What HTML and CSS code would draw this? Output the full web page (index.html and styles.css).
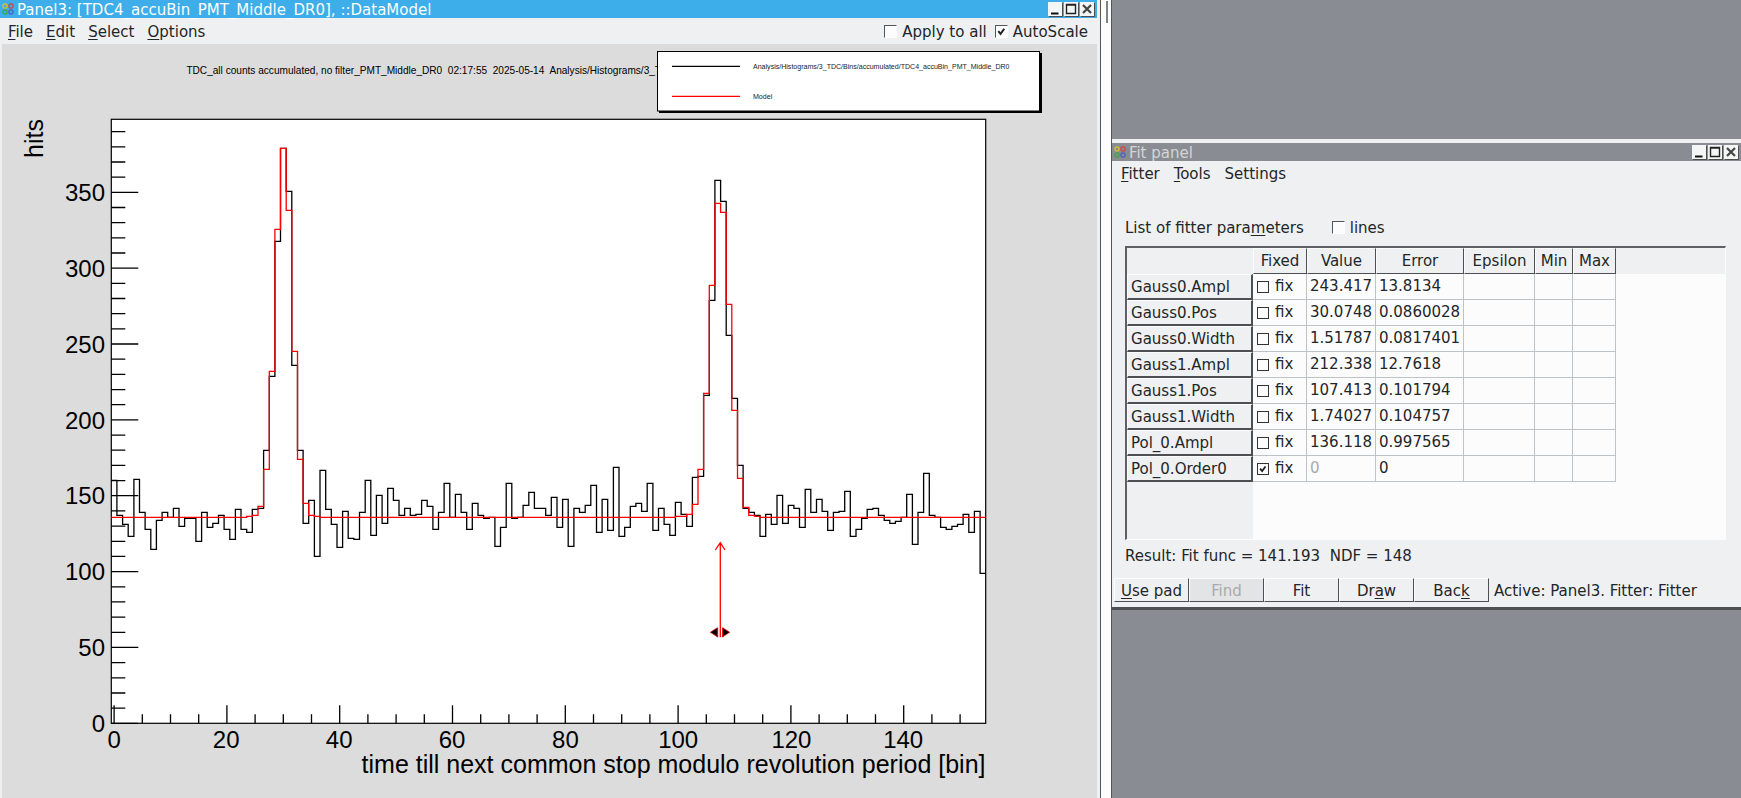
FILE: index.html
```html
<!DOCTYPE html>
<html lang="en">
<head>
    <meta charset="UTF-8">
    <title>Panel3 and Fit panel</title>
    <link rel="stylesheet" href="styles.css">
</head>
<body>
    <svg class="defs">
        <symbol id="rootLogo" viewBox="0 0 12 12">
            <circle cx="3" cy="3" r="2.1" fill="none" stroke="#d9c32a" stroke-width="1.2"/>
            <circle cx="9" cy="3" r="2.1" fill="none" stroke="#d8403c" stroke-width="1.2"/>
            <circle cx="3" cy="9" r="2.1" fill="none" stroke="#3fa53f" stroke-width="1.2"/>
            <circle cx="9" cy="9" r="2.1" fill="none" stroke="#4a5fc0" stroke-width="1.2"/>
        </symbol>
        <symbol id="winMin" viewBox="0 0 14 14"><path d="M3 10.5h7.5v2H3z" fill="#111"/></symbol>
        <symbol id="winMax" viewBox="0 0 14 14"><path d="M2.5 2.5h9v9h-9z M2.5 3h9" fill="none" stroke="#222" stroke-width="1.4"/></symbol>
        <symbol id="winClose" viewBox="0 0 14 14"><path d="M3 3l8 8M11 3l-8 8" fill="none" stroke="#444" stroke-width="2.2"/></symbol>
        <symbol id="tick" viewBox="0 0 12 12"><path d="M2.5 5.5l2.5 3 4-5.5" fill="none" stroke="#222" stroke-width="2.2"/></symbol>
    </svg>

    <!-- Canvas window -->
    <div class="panel-window">
        <div class="title-bar active">
            <svg class="logo"><use href="#rootLogo"/></svg>
            <span class="title-text">Panel3: [TDC4_accuBin_PMT_Middle_DR0], ::DataModel</span>
            <div class="win-buttons">
                <span class="win-btn"><svg><use href="#winMin"/></svg></span>
                <span class="win-btn"><svg><use href="#winMax"/></svg></span>
                <span class="win-btn"><svg><use href="#winClose"/></svg></span>
            </div>
        </div>
        <div class="menu-bar">
            <span><u>F</u>ile</span>
            <span><u>E</u>dit</span>
            <span><u>S</u>elect</span>
            <span><u>O</u>ptions</span>
            <div class="menu-right">
                <span class="check bevel"></span>
                <span class="check-text">Apply to all</span>
                <span class="check bevel"><svg><use href="#tick"/></svg></span>
                <span class="check-text">AutoScale</span>
            </div>
        </div>
        <div class="canvas">
            <svg id="plot" viewBox="2 44 1093 754" width="1093" height="754">
                <rect class="frame" x="111.3" y="119.3" width="874.4" height="604"/>
                <path id="ticks" class="line-black"/>
                <path id="histLine" class="line-black"/>
                <path id="modelLine" class="line-red"/>

                <!-- marker under the second peak -->
                <path class="line-red" d="M720.3 637.3V542.7M715.3 550l5-7.3 4.7 7.3M717.5 627.7v9.6M723 627.7v9.6"/>
                <path class="marker" d="M710.3 632.3l7-4.5v9zM729.7 632.3l-7-4.5v9z"/>

                <text class="plot-title" x="186.4" y="73.5">TDC_all counts accumulated, no filter_PMT_Middle_DR0  02:17:55  2025-05-14  Analysis/Histograms/3_TDC</text>

                <rect class="legend-shadow" x="659" y="53" width="383" height="60"/>
                <rect class="legend" x="657.5" y="51.5" width="382" height="59.5"/>
                <path class="line-black" d="M672 66.3H740"/>
                <path class="line-red" d="M672 96.3H740"/>
                <text class="legend-text" x="753" y="69">Analysis/Histograms/3_TDC/Bins/accumulated/TDC4_accuBin_PMT_Middle_DR0</text>
                <text class="legend-text" x="753" y="99">Model</text>

                <text class="axis-text end" x="105" y="732.3">0</text>
                <text class="axis-text end" x="105" y="656.3">50</text>
                <text class="axis-text end" x="105" y="580.3">100</text>
                <text class="axis-text end" x="105" y="504.3">150</text>
                <text class="axis-text end" x="105" y="429">200</text>
                <text class="axis-text end" x="105" y="353">250</text>
                <text class="axis-text end" x="105" y="277">300</text>
                <text class="axis-text end" x="105" y="201.3">350</text>
                <text class="axis-title end" transform="translate(43 119) rotate(-90)">hits</text>

                <text class="axis-text mid" x="114.3" y="748.3">0</text>
                <text class="axis-text mid" x="226.2" y="748.3">20</text>
                <text class="axis-text mid" x="339.2" y="748.3">40</text>
                <text class="axis-text mid" x="452.1" y="748.3">60</text>
                <text class="axis-text mid" x="565.4" y="748.3">80</text>
                <text class="axis-text mid" x="678.2" y="748.3">100</text>
                <text class="axis-text mid" x="791.4" y="748.3">120</text>
                <text class="axis-text mid" x="903.2" y="748.3">140</text>
                <text class="axis-title end" x="985.5" y="772.8">time till next common stop modulo revolution period [bin]</text>
            </svg>
        </div>
    </div>

    <div class="splitter"><span class="split-handle"></span></div>

    <div class="mdi-area">
        <!-- Fit panel window -->
        <div class="fit-window">
            <div class="title-bar inactive">
                <svg class="logo"><use href="#rootLogo"/></svg>
                <span class="title-text">Fit panel</span>
                <div class="win-buttons">
                    <span class="win-btn"><svg><use href="#winMin"/></svg></span>
                    <span class="win-btn"><svg><use href="#winMax"/></svg></span>
                    <span class="win-btn"><svg><use href="#winClose"/></svg></span>
                </div>
            </div>
            <div class="fit-menu">
                <span><u>F</u>itter</span>
                <span><u>T</u>ools</span>
                <span>Settings</span>
            </div>
            <div class="fit-label">
                <span>List of fitter para<u>m</u>eters</span>
                <span class="check bevel lines-check"></span>
                <span>lines</span>
            </div>
            <div class="param-frame">
                <table class="param-table">
                    <colgroup>
                        <col class="col-name">
                        <col class="col-fixed">
                        <col class="col-value">
                        <col class="col-error">
                        <col class="col-epsilon">
                        <col class="col-min">
                        <col class="col-max">
                        <col>
                    </colgroup>
                    <tr>
                        <th class="corner"></th>
                        <th>Fixed</th>
                        <th>Value</th>
                        <th>Error</th>
                        <th>Epsilon</th>
                        <th>Min</th>
                        <th>Max</th>
                        <th class="head-fill"></th>
                    </tr>
                    <tr>
                        <th class="row-head">Gauss0.Ampl</th>
                        <td><span class="check box"></span>fix</td>
                        <td>243.417</td><td>13.8134</td><td></td><td></td><td></td><td class="blank"></td>
                    </tr>
                    <tr>
                        <th class="row-head">Gauss0.Pos</th>
                        <td><span class="check box"></span>fix</td>
                        <td>30.0748</td><td>0.0860028</td><td></td><td></td><td></td><td class="blank"></td>
                    </tr>
                    <tr>
                        <th class="row-head">Gauss0.Width</th>
                        <td><span class="check box"></span>fix</td>
                        <td>1.51787</td><td>0.0817401</td><td></td><td></td><td></td><td class="blank"></td>
                    </tr>
                    <tr>
                        <th class="row-head">Gauss1.Ampl</th>
                        <td><span class="check box"></span>fix</td>
                        <td>212.338</td><td>12.7618</td><td></td><td></td><td></td><td class="blank"></td>
                    </tr>
                    <tr>
                        <th class="row-head">Gauss1.Pos</th>
                        <td><span class="check box"></span>fix</td>
                        <td>107.413</td><td>0.101794</td><td></td><td></td><td></td><td class="blank"></td>
                    </tr>
                    <tr>
                        <th class="row-head">Gauss1.Width</th>
                        <td><span class="check box"></span>fix</td>
                        <td>1.74027</td><td>0.104757</td><td></td><td></td><td></td><td class="blank"></td>
                    </tr>
                    <tr>
                        <th class="row-head">Pol_0.Ampl</th>
                        <td><span class="check box"></span>fix</td>
                        <td>136.118</td><td>0.997565</td><td></td><td></td><td></td><td class="blank"></td>
                    </tr>
                    <tr>
                        <th class="row-head">Pol_0.Order0</th>
                        <td><span class="check box"><svg><use href="#tick"/></svg></span>fix</td>
                        <td class="disabled">0</td><td>0</td><td></td><td></td><td></td><td class="blank"></td>
                    </tr>
                    <tr class="filler">
                        <th class="filler-head"></th>
                        <td colspan="7" class="blank"></td>
                    </tr>
                </table>
            </div>
            <div class="fit-result">Result: Fit func = 141.193  NDF = 148</div>
            <div class="fit-buttons">
                <span class="push-btn"><u>U</u>se pad</span>
                <span class="push-btn off">Find</span>
                <span class="push-btn">Fit</span>
                <span class="push-btn">Dr<u>a</u>w</span>
                <span class="push-btn">Bac<u>k</u></span>
                <span class="fit-status">Active: Panel3. Fitter: Fitter</span>
            </div>
        </div>
    </div>

    <script src="plot.js"></script>
</body>
</html>
```

FILE: styles.css
```css
/* Global Reset */
* {
    margin: 0;
    padding: 0;
    box-sizing: border-box;
}

body {
    display: flex;
    width: 1741px;
    height: 798px;
    overflow: hidden;
    font-family: "DejaVu Sans Condensed", "DejaVu Sans", sans-serif;
    font-stretch: condensed;
    font-size: 16.7px;
    color: #232629;
    background-color: #eff0f1;
}

u {
    text-underline-offset: 2px;
}

.defs {
    position: absolute;
    width: 0;
    height: 0;
}

/* Window chrome */
.panel-window {
    display: flex;
    flex-direction: column;
    width: 1100px;
    border-right: 3px solid #eff0f1;
}

.title-bar {
    display: flex;
    align-items: center;
    height: 18px;
    flex-shrink: 0;
    padding-left: 2px;
}

.title-bar.active {
    background-color: #3daee9;
    color: #fcfcfc;
}

.title-bar.inactive {
    background-color: #898c93;
    color: #d4d5d7;
}

.logo {
    width: 12px;
    height: 12px;
    margin-right: 3px;
    flex-shrink: 0;
}

.title-text {
    white-space: nowrap;
}

.win-buttons {
    display: flex;
    gap: 2px;
    margin-left: auto;
    margin-right: 3px;
}

.win-btn {
    width: 14px;
    height: 14px;
    background-color: #f4f5f5;
    box-shadow: 1px 1px 0 #4d4d4d;
}

.win-btn svg {
    display: block;
    width: 14px;
    height: 14px;
}

.menu-bar {
    display: flex;
    align-items: center;
    gap: 13px;
    height: 26px;
    flex-shrink: 0;
    padding-left: 8px;
}

.menu-right {
    display: flex;
    align-items: center;
    margin-left: auto;
    padding-right: 9px;
}

.check-text {
    margin-left: 5px;
    margin-right: 8px;
}

.check-text:last-child {
    margin-right: 0;
}

.check {
    display: block;
    width: 12px;
    height: 12px;
    flex-shrink: 0;
    background-color: #fcfcfc;
}

.check svg {
    display: block;
    width: 100%;
    height: 100%;
}

.check.bevel {
    width: 13px;
    height: 13px;
    border: 1px solid;
    border-color: #555 #fcfcfc #fcfcfc #555;
}

.check.box {
    display: inline-block;
    border: 1px solid #333;
    margin-left: 1px;
    margin-right: 6px;
    vertical-align: -2px;
}

/* Plot */
.canvas {
    flex: 1;
    margin-left: 2px;
    background-color: #dcdcdc;
    overflow: hidden;
}

#plot {
    display: block;
    font-family: "Liberation Sans", Arial, sans-serif;
    font-stretch: normal;
}

.frame {
    fill: #fff;
    stroke: #000;
    stroke-width: 1.2;
}

.line-black {
    fill: none;
    stroke: #000;
    stroke-width: 1.3;
}

.line-red {
    fill: none;
    stroke: #f00;
    stroke-width: 1.3;
}

.marker {
    fill: #000;
    stroke: #f00;
    stroke-width: 0.7;
}

.plot-title {
    font-size: 10.1px;
    fill: #000;
    white-space: pre;
}

.legend-shadow {
    fill: #000;
}

.legend {
    fill: #fff;
    stroke: #000;
    stroke-width: 1;
}

.legend-text {
    font-size: 7.05px;
    fill: #222;
}

.axis-text {
    font-size: 24px;
    fill: #000;
}

.axis-title {
    font-size: 25px;
    fill: #000;
}

.end {
    text-anchor: end;
}

.mid {
    text-anchor: middle;
}

/* Space between windows */
.splitter {
    width: 12px;
    height: 100%;
    flex-shrink: 0;
    border-left: 1px solid #555;
    border-right: 1px solid #555;
    background-color: #fcfcfc;
    padding: 1px 0 0 5px;
}

.split-handle {
    display: block;
    width: 2px;
    height: 22px;
    background-color: #7f8286;
}

.mdi-area {
    flex: 1;
    background-color: #898c93;
    padding-top: 139px;
}

/* Fit panel */
.fit-window {
    border-top: 4px solid #eff0f1;
    border-bottom: 3px solid #4d4f52;
    background-color: #eff0f1;
    padding-bottom: 5px;
}

.fit-menu {
    display: flex;
    align-items: center;
    gap: 14px;
    height: 24px;
    padding-left: 9px;
}

.fit-label {
    display: flex;
    align-items: center;
    height: 22px;
    margin-top: 31px;
    padding-left: 13px;
}

.lines-check {
    margin-left: 28px;
    margin-right: 5px;
}

.param-frame {
    width: 601px;
    height: 294px;
    margin-top: 8px;
    margin-left: 13px;
    border-top: 2px solid #5d6064;
    border-left: 2px solid #5d6064;
    border-right: 1px solid #fcfcfc;
    border-bottom: 1px solid #fcfcfc;
}

.param-table {
    width: 100%;
    height: 100%;
    table-layout: fixed;
    border-collapse: separate;
    border-spacing: 0;
}

.param-table tr {
    height: 26px;
}

.param-table tr.filler {
    height: auto;
}

.col-name { width: 126px; }
.col-fixed { width: 54px; }
.col-value { width: 69px; }
.col-error { width: 88px; }
.col-epsilon { width: 71px; }
.col-min { width: 38px; }
.col-max { width: 43px; }

.param-table th {
    font-weight: normal;
    padding-bottom: 2px;
    background-color: #eff0f1;
    border-top: 1px solid #fcfcfc;
    border-left: 1px solid #fcfcfc;
    border-right: 1px solid #4d4f52;
    border-bottom: 1px solid #4d4f52;
}

.param-table th.corner {
    border: none;
    border-bottom: 0;
}

.param-table th.head-fill {
    border: none;
}

.param-table th.row-head {
    text-align: left;
    padding-left: 3px;
    padding-bottom: 1px;
    border-bottom-width: 2px;
    border-right-width: 2px;
    white-space: nowrap;
}

.param-table th.filler-head {
    border: none;
}

.param-table td {
    background-color: #fcfcfc;
    padding-left: 3px;
    padding-bottom: 3px;
    border-right: 1px solid #bdc3c7;
    border-bottom: 1px solid #bdc3c7;
    white-space: nowrap;
}

.param-table td.blank {
    border: none;
}

.param-table td.disabled {
    color: #a8aaac;
}

.fit-result {
    display: flex;
    align-items: center;
    height: 22px;
    margin-top: 4px;
    padding-left: 13px;
    white-space: pre;
}

.fit-buttons {
    display: flex;
    align-items: center;
    height: 24px;
    margin-top: 12px;
    padding-left: 2px;
}

.push-btn {
    display: flex;
    align-items: center;
    justify-content: center;
    width: 75px;
    height: 24px;
    border: 1px solid;
    border-color: #fcfcfc #4d4f52 #4d4f52 #fcfcfc;
}

.push-btn.off {
    background-color: #e3e4e5;
    color: #a8aaac;
}

.fit-status {
    margin-left: 5px;
    white-space: nowrap;
}
```

FILE: plot.js
```js
// Pixel row of each histogram bin, from bin 0 to bin 154
const ROW_SHIFT = 0.3;
const hist = [
    480, 515, 524, 536, 479, 512, 529, 549, 520, 512, 517, 508, 526, 518, 518, 541,
    512, 527, 523, 515, 529, 539, 509, 529, 532, 509, 508, 450, 376, 241, 148, 191,
    365, 450, 523, 500, 556, 470, 509, 524, 547, 511, 538, 539, 512, 480, 535, 495,
    523, 488, 500, 515, 508, 515, 514, 500, 506, 529, 512, 483, 517, 494, 512, 529,
    503, 515, 518, 517, 546, 527, 483, 518, 517, 505, 492, 508, 508, 515, 497, 527,
    499, 546, 508, 512, 505, 485, 532, 499, 530, 467, 536, 527, 506, 503, 511, 483,
    530, 508, 524, 535, 502, 514, 526, 477, 476, 395, 300, 180, 201, 335, 398, 465,
    508, 512, 515, 536, 514, 524, 495, 523, 505, 508, 527, 489, 512, 499, 511, 530,
    512, 511, 491, 536, 529, 518, 509, 508, 515, 520, 523, 521, 517, 494, 544, 512,
    473, 515, 517, 527, 529, 526, 524, 514, 532, 511, 573
];

// Model sits on the baseline except around the two peaks
const BASELINE = 517;
const peaks = {
    24: 516, 25: 515, 26: 506, 27: 469, 28: 371, 29: 229, 30: 148, 31: 210,
    32: 351, 33: 459, 34: 503, 35: 515, 36: 516,
    100: 516, 101: 516, 102: 514, 103: 504, 104: 469, 105: 393, 106: 285, 107: 203,
    108: 212, 109: 304, 110: 410, 111: 478, 112: 507, 113: 515, 114: 516
};

const LEFT = 111.3;
const RIGHT = 985.7;
const BOTTOM = 723.3;
const BIN_WIDTH = (RIGHT - LEFT) / hist.length;

function stepPath(rowOf) {
    let d = "";
    for (let i = 0; i < hist.length; i++) {
        const x0 = (LEFT + i * BIN_WIDTH).toFixed(1);
        const x1 = (LEFT + (i + 1) * BIN_WIDTH).toFixed(1);
        const y = (rowOf(i) + ROW_SHIFT).toFixed(1);
        d += (i === 0 ? "M" : "L") + x0 + " " + y + "L" + x1 + " " + y;
    }
    return d;
}

function tickPath() {
    let d = "";
    // y axis: 10 hits per minor tick
    for (let k = 0; k < 40; k++) {
        const y = (BOTTOM - k * 15.17).toFixed(1);
        const len = k % 5 === 0 ? 27 : 14;
        d += "M" + LEFT + " " + y + "h" + len;
    }
    // x axis: 5 bins per minor tick
    for (let k = 0; k < 31; k++) {
        const x = (114.1 + k * 28.2).toFixed(1);
        const len = k % 4 === 0 ? 18 : 9;
        d += "M" + x + " " + BOTTOM + "v-" + len;
    }
    return d;
}

document.getElementById("ticks").setAttribute("d", tickPath());
document.getElementById("histLine").setAttribute("d", stepPath(i => hist[i]));
document.getElementById("modelLine").setAttribute("d", stepPath(i => peaks[i] || BASELINE));
```
